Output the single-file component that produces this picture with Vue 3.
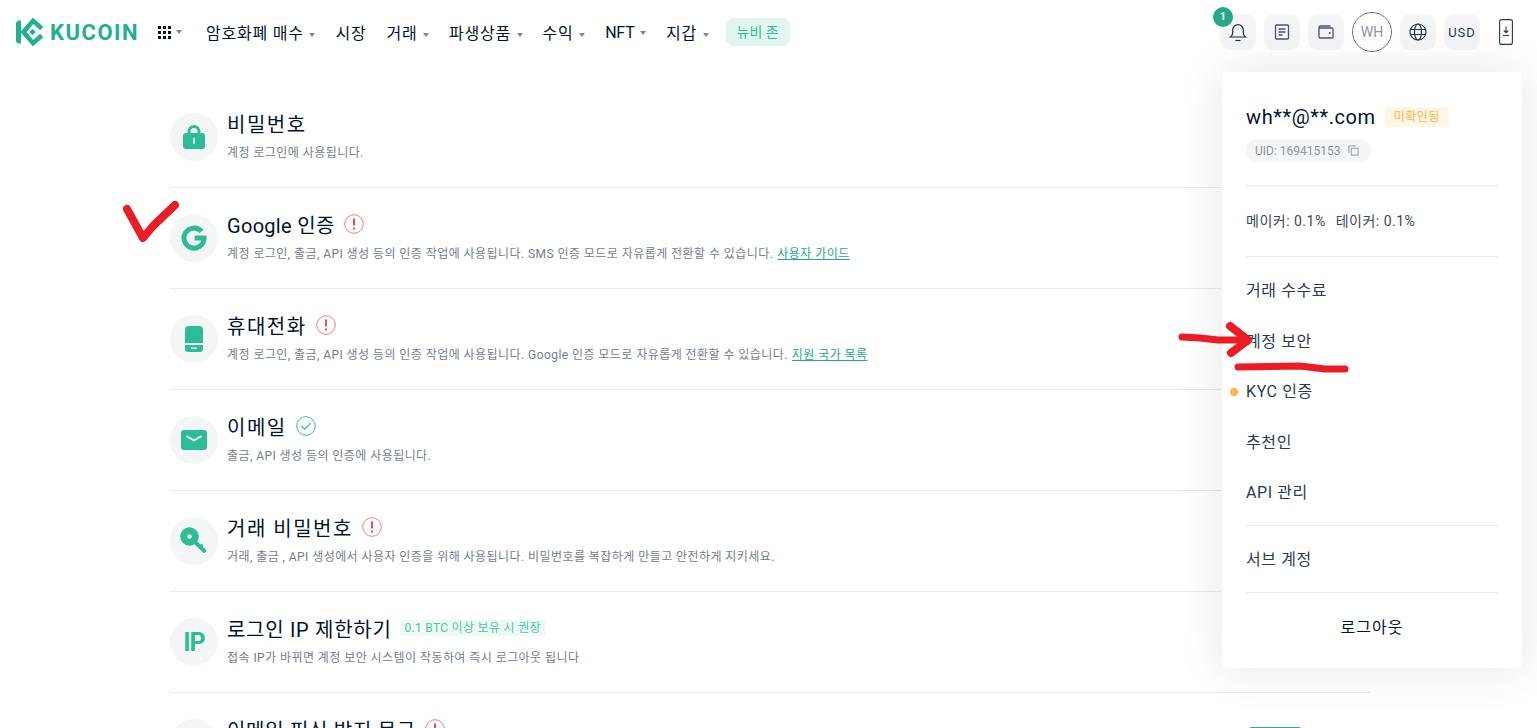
<script setup>
const navItems = [
  { label: '암호화폐 매수', arrow: true },
  { label: '시장', arrow: false },
  { label: '거래', arrow: true },
  { label: '파생상품', arrow: true },
  { label: '수익', arrow: true },
  { label: 'NFT', arrow: true, latin: true },
  { label: '지갑', arrow: true }
]

const rows = [
  { icon: 'lock', title: '비밀번호', desc: '계정 로그인에 사용됩니다.' },
  { icon: 'google', title: 'Google 인증', latin: true, status: 'warn', desc: '계정 로그인, 출금, API 생성 등의 인증 작업에 사용됩니다. SMS 인증 모드로 자유롭게 전환할 수 있습니다.', link: '사용자 가이드' },
  { icon: 'phone', title: '휴대전화', status: 'warn', desc: '계정 로그인, 출금, API 생성 등의 인증 작업에 사용됩니다. Google 인증 모드로 자유롭게 전환할 수 있습니다.', link: '지원 국가 목록' },
  { icon: 'mail', title: '이메일', status: 'ok', desc: '출금, API 생성 등의 인증에 사용됩니다.' },
  { icon: 'key', title: '거래 비밀번호', status: 'warn', desc: '거래, 출금 , API 생성에서 사용자 인증을 위해 사용됩니다. 비밀번호를 복잡하게 만들고 안전하게 지키세요.' },
  { icon: 'ip', title: '로그인 IP 제한하기', tight: true, tag: '0.1 BTC 이상 보유 시 권장', desc: '접속 IP가 바뀌면 계정 보안 시스템이 작동하여 즉시 로그아웃 됩니다' },
  { icon: 'lock', title: '이메일 피싱 방지 문구', tight: true, status: 'warn', desc: '', button: true }
]

const menuItems = ['거래 수수료', '계정 보안', 'KYC 인증', '추천인', 'API 관리']
</script>

<template>
  <div class="page">
    <header class="header">
      <div class="logo">
        <svg class="logo-mark" viewBox="0 0 28 28" width="28" height="28">
          <path fill="#23af91" d="M0 4.500 2 2.500h3v23H2l-2-2z" />
          <path fill="none" stroke="#23af91" stroke-width="4.500" d="M25.800 10.500 17 2.800 7.500 14 17 25.200l8.800-7.700" />
          <path fill="#23af91" d="M16.500 10.800 19.700 14l-3.200 3.200-3.200-3.200z" />
        </svg>
        <span class="logo-text">KUCOIN</span>
      </div>
      <div class="apps">
        <span class="apps-grid"><i v-for="n in 9" :key="n"></i></span>
        <span class="caret"></span>
      </div>
      <nav class="nav">
        <a v-for="item in navItems" :key="item.label" class="nav-item" :class="{ latin: item.latin }">
          {{ item.label }}<span v-if="item.arrow" class="caret"></span>
        </a>
      </nav>
      <span class="newbie">뉴비 존</span>

      <div class="tools">
        <div class="tool">
          <span class="badge">1</span>
          <svg viewBox="0 0 20 20" width="20" height="20" fill="none" stroke="#1c2a40" stroke-width="1.200">
            <path d="M2.500 15h15c-1.500-1-2.200-2-2.200-4.500V8a5.300 5.300 0 0 0-10.600 0v2.500c0 2.500-.7 3.500-2.200 4.500z" />
            <path d="M7.500 18.500h5" />
          </svg>
        </div>
        <div class="tool">
          <svg viewBox="0 0 20 20" width="20" height="20" fill="none" stroke="#4a5568" stroke-width="1.300">
            <rect x="3.500" y="3" width="13" height="14" rx="1" />
            <path d="M6.500 7h7M6.500 10h7M6.500 13h4" />
          </svg>
        </div>
        <div class="tool">
          <svg viewBox="0 0 20 20" width="20" height="20" fill="none" stroke="#4a5568" stroke-width="1.300">
            <path d="M3 6.500V5.500a1.500 1.500 0 0 1 1.500-1.500h10" />
            <rect x="3" y="6" width="14" height="10" rx="1" />
            <path d="M13 11h1.500" stroke-width="2" />
          </svg>
        </div>
        <div class="avatar">WH</div>
        <div class="tool">
          <svg viewBox="0 0 20 20" width="20" height="20" fill="none" stroke="#2b3a50" stroke-width="1.200">
            <circle cx="10" cy="10" r="8" />
            <ellipse cx="10" cy="10" rx="3.500" ry="8" />
            <path d="M2 7.500h16M2 12.500h16" />
          </svg>
        </div>
        <div class="tool usd">USD</div>
        <div class="download">
          <svg viewBox="0 0 14 26" width="14" height="26" fill="none" stroke="#2b3a50" stroke-width="1.100">
            <rect x="0.600" y="0.600" width="12.800" height="24.800" rx="2" />
            <path d="M7 7.500v6M4.800 11.500 7 13.700l2.200-2.200M4 16.500h6" />
          </svg>
        </div>
      </div>
    </header>

    <main class="main">
      <section v-for="row in rows" :key="row.title" class="row">
        <div class="icon-circle">
          <svg v-if="row.icon === 'lock'" viewBox="0 0 22 24" width="22" height="24">
            <path fill="#2dbd96" fill-rule="evenodd" d="M4.500 8V6.500a6.500 6.500 0 0 1 13 0V8H19a3 3 0 0 1 3 3v10a3 3 0 0 1-3 3H3a3 3 0 0 1-3-3V11a3 3 0 0 1 3-3zM7.500 8h7V6.500a3.500 3.500 0 0 0-7 0zM10 13v5.500h2V13z" />
          </svg>
          <svg v-else-if="row.icon === 'google'" viewBox="0 0 26 26" width="26" height="26" fill="none" stroke="#2dbd96" stroke-width="5">
            <path d="M20.500 6.500A10 10 0 1 0 23 13H13.500" />
          </svg>
          <svg v-else-if="row.icon === 'phone'" viewBox="0 0 18 26" width="18" height="26">
            <path fill="#2dbd96" fill-rule="evenodd" d="M4 0h10a4 4 0 0 1 4 4v13H0V4a4 4 0 0 1 4-4zM0 19h18v4a3 3 0 0 1-3 3H3a3 3 0 0 1-3-3zM6 21.500V23h6v-1.500z" />
          </svg>
          <svg v-else-if="row.icon === 'mail'" viewBox="0 0 26 20" width="26" height="20">
            <rect width="26" height="20" rx="3" fill="#2dbd96" />
            <path d="M5.500 6 13 10.500 20.500 6" fill="none" stroke="#fff" stroke-width="1.800" />
          </svg>
          <svg v-else-if="row.icon === 'key'" class="key-icon" viewBox="0 0 26 26" width="26" height="26">
            <path d="m15 15 10.500 10" stroke="#2dbd96" stroke-width="4" />
            <circle cx="9.500" cy="9.500" r="9.300" fill="#2dbd96" />
            <circle cx="9.500" cy="9.500" r="2.200" fill="#f4f5f6" />
            <path d="m20 20 2.500-2.500" stroke="#4aa5c9" stroke-width="2.500" />
          </svg>
          <span v-else class="ip-icon">IP</span>
        </div>
        <div class="row-body">
          <div class="row-title">
            <h3 :class="{ latin: row.latin, tight: row.tight }">{{ row.title }}</h3>
            <svg v-if="row.status === 'warn'" class="status" viewBox="0 0 20 20" width="20" height="20">
              <circle cx="10" cy="10" r="9.300" fill="none" stroke="#f4777b" stroke-width="1" />
              <path d="M10 4.500v7" stroke="#ef4b50" stroke-width="2" />
              <path d="M10 13.500v2" stroke="#ef4b50" stroke-width="2" />
            </svg>
            <svg v-if="row.status === 'ok'" class="status" viewBox="0 0 20 20" width="20" height="20" fill="none" stroke="#2dbd96">
              <circle cx="10" cy="10" r="9.300" />
              <path d="m5.500 10 3.200 3.200 6-6" stroke-width="1.200" />
            </svg>
            <span v-if="row.tag" class="row-tag">{{ row.tag }}</span>
          </div>
          <p class="row-desc">{{ row.desc }}<a v-if="row.link" class="row-link">{{ row.link }}</a></p>
        </div>
        <div v-if="row.button" class="row-button"></div>
      </section>
    </main>

    <aside class="menu">
      <div class="menu-head">
        <div class="menu-email">
          <span>wh**@**.com</span>
          <span class="unverified">미확인됨</span>
        </div>
        <div class="uid">
          UID: 169415153
          <svg viewBox="0 0 12 12" width="11" height="11" fill="none" stroke="#8b95a3" stroke-width="1">
            <rect x="3.500" y="3.500" width="7.500" height="7.500" />
            <path d="M1 8.500V1h7.500" />
          </svg>
        </div>
      </div>
      <div class="fees">메이커: 0.1%<span>테이커: 0.1%</span></div>
      <div class="menu-list">
        <div v-for="item in menuItems" :key="item" class="menu-item">
          <span v-if="item === 'KYC 인증'" class="dot"></span>{{ item }}
        </div>
      </div>
      <div class="menu-list sub">
        <div class="menu-item">서브 계정</div>
      </div>
      <div class="logout">로그아웃</div>
    </aside>

    <svg class="marks" viewBox="0 0 1537 728" width="1537" height="728" fill="none" stroke="#ec1c24" stroke-width="7" stroke-linecap="round" stroke-linejoin="round">
      <path d="M127 209 143 238 153 226 175 205" stroke-width="8" />
      <path d="M1182 337 1200 338 1218 340 1246 340" />
      <path d="M1230 326 1248 340 1231 353" stroke-width="8" />
      <path d="M1238 367 1300 366 1325 369 1345 369" />
    </svg>
  </div>
</template>

<style>
html, body {
  margin: 0;
  background: #fff;
  overflow: hidden;
}
</style>

<style scoped>
.page {
  position: relative;
  width: 1537px;
  height: 728px;
  overflow: hidden;
  background: #fff;
  color: #00142a;
  font-family: Roboto, "Noto Sans CJK KR", sans-serif;
}

.header {
  display: flex;
  align-items: center;
  height: 64px;
  padding-left: 16px;
  padding-right: 24px;
}
.logo {
  display: flex;
  align-items: center;
  gap: 6px;
  width: 142px;
}
.logo-text {
  color: #23af91;
  font-size: 22px;
  font-weight: 700;
  letter-spacing: 1.500px;
}
.apps {
  display: flex;
  align-items: center;
  gap: 5px;
  width: 48px;
}
.apps-grid {
  display: grid;
  grid-template-columns: repeat(3, 3px);
  gap: 2px;
}
.apps-grid i {
  width: 3px;
  height: 3px;
  background: #00142a;
}
.caret {
  display: inline-block;
  width: 0;
  height: 0;
  margin-left: 5.500px;
  border-left: 3.500px solid transparent;
  border-right: 3.500px solid transparent;
  border-top: 4px solid #7d8694;
  vertical-align: middle;
}
.apps .caret {
  margin-left: 0;
}
.nav {
  display: flex;
  gap: 20px;
  align-items: center;
}
.nav-item {
  font-size: 16px;
  letter-spacing: 0.800px;
  white-space: nowrap;
}
.nav-item.latin {
  letter-spacing: -0.200px;
}
.newbie {
  margin-left: 17px;
  padding: 0 11px;
  height: 28px;
  line-height: 28px;
  border-radius: 8px;
  background: #e2f6f1;
  color: #2dbd96;
  font-size: 14px;
}

.tools {
  margin-left: auto;
  display: flex;
  align-items: center;
  gap: 8px;
}
.tool {
  position: relative;
  display: flex;
  align-items: center;
  justify-content: center;
  width: 36px;
  height: 36px;
  border-radius: 10px;
  background: #f4f5f6;
}
.usd {
  font-size: 13px;
  letter-spacing: 1px;
  color: #2b3a50;
}
.badge {
  position: absolute;
  top: -7px;
  left: -7px;
  width: 20px;
  height: 20px;
  border-radius: 50%;
  background: #23a88a;
  color: #fff;
  font-size: 11px;
  font-weight: 700;
  line-height: 20px;
  text-align: center;
}
.avatar {
  box-sizing: border-box;
  width: 40px;
  height: 40px;
  line-height: 38px;
  border: 1px solid #6b7787;
  border-radius: 50%;
  color: #8b95a3;
  font-size: 14px;
  text-align: center;
}
.download {
  display: flex;
  margin-left: 11px;
}

.main {
  margin-left: 170px;
  width: 1200px;
  padding-top: 23px;
}
.row {
  box-sizing: border-box;
  display: flex;
  height: 101px;
  padding-top: 26px;
  border-bottom: 1px solid #e9ebed;
}
.icon-circle {
  display: flex;
  align-items: center;
  justify-content: center;
  flex: none;
  width: 48px;
  height: 48px;
  border-radius: 50%;
  background: #f4f5f6;
}
.key-icon {
  margin: -2px 0 0 -2px;
}
.ip-icon {
  color: #2dbd96;
  font-size: 25px;
  font-weight: 700;
  letter-spacing: -1px;
}
.row-body {
  margin-left: 9px;
  margin-top: -4px;
}
.row-title {
  display: flex;
  align-items: center;
  height: 28px;
}
.row-title h3 {
  margin: 0;
  font-size: 20px;
  font-weight: 400;
  letter-spacing: 1.500px;
}
.row-title h3.latin {
  letter-spacing: 0.300px;
}
.row-title h3.tight {
  letter-spacing: 0.700px;
}
.status {
  margin-left: 9px;
}
.row-tag {
  margin-left: 9px;
  padding: 0 4px;
  height: 16px;
  line-height: 16px;
  background: #eefaf6;
  color: #4cc6a5;
  font-size: 12px;
  letter-spacing: 0.300px;
}
.row-desc {
  margin: 8px 0 0;
  color: #737e8d;
  font-size: 12px;
  letter-spacing: 0.440px;
  line-height: 16px;
  white-space: nowrap;
}
.row-link {
  margin-left: 4px;
  color: #23a88a;
  text-decoration: underline;
}
.row-button {
  margin-left: auto;
  margin-right: 68px;
  margin-top: 8px;
  width: 54px;
  height: 32px;
  border-radius: 4px;
  background: #23af91;
}

.menu {
  position: absolute;
  top: 72px;
  left: 1222px;
  box-sizing: border-box;
  width: 300px;
  height: 596px;
  padding: 0 24px;
  background: #fff;
  border-radius: 4px;
  box-shadow: 0 0 48px rgba(0, 20, 42, 0.1);
}
.menu-head {
  height: 114px;
  padding-top: 32px;
  box-sizing: border-box;
  border-bottom: 1px solid #e9ebed;
}
.menu-email {
  display: flex;
  align-items: center;
  gap: 9px;
  font-size: 20px;
  letter-spacing: 0.600px;
  line-height: 26px;
}
.unverified {
  padding: 0 9px;
  height: 20px;
  line-height: 20px;
  background: #fff6e5;
  color: #ffb547;
  font-size: 12px;
  letter-spacing: 0.500px;
}
.uid {
  display: inline-flex;
  align-items: center;
  gap: 7px;
  margin-top: 9px;
  height: 23px;
  padding: 0 12px 0 9px;
  border-radius: 12px;
  background: #f3f5f6;
  color: #8b95a3;
  font-size: 12px;
}
.fees {
  height: 71px;
  line-height: 71px;
  box-sizing: border-box;
  border-bottom: 1px solid #e9ebed;
  color: #3b4758;
  font-size: 14px;
  letter-spacing: 0.500px;
}
.fees span {
  margin-left: 10px;
}
.menu-list {
  padding: 8px 0 7px;
  border-bottom: 1px solid #e9ebed;
}
.menu-item {
  position: relative;
  height: 50.600px;
  line-height: 52px;
  color: #2b3a50;
  font-size: 16px;
  letter-spacing: 0.600px;
}
.dot {
  position: absolute;
  left: -16px;
  top: 22px;
  width: 8px;
  height: 8px;
  border-radius: 50%;
  background: #ffb547;
}
.logout {
  padding-top: 20px;
  text-align: center;
  font-size: 16px;
  letter-spacing: 1px;
  line-height: 30px;
  color: #00142a;
}

.marks {
  position: absolute;
  inset: 0;
  pointer-events: none;
}
</style>
